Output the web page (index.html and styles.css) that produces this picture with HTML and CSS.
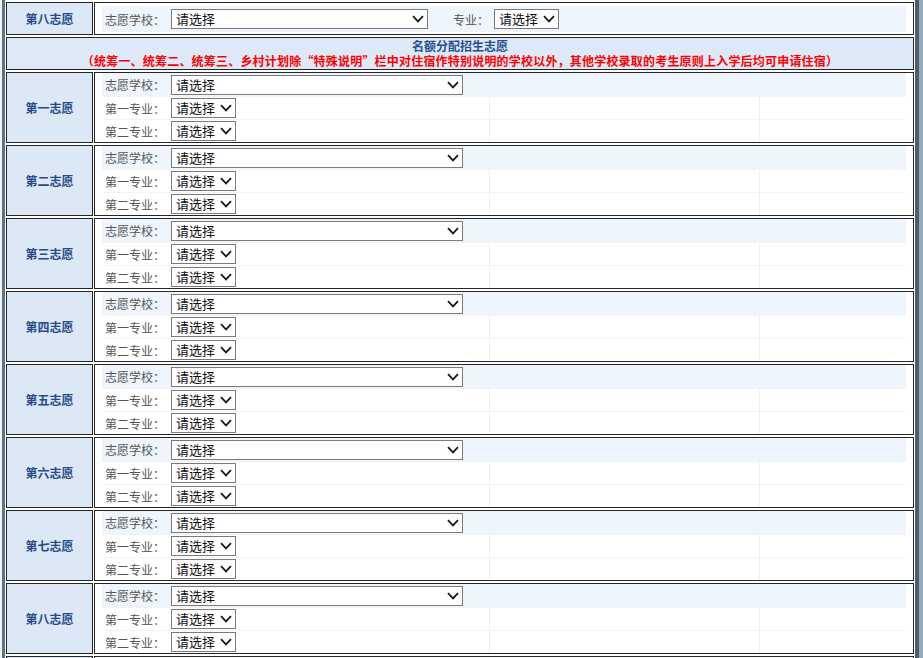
FILE: index.html
```html
<!DOCTYPE html>
<html lang="zh-CN">
<head>
<meta charset="utf-8">
<title>志愿填报</title>
<link rel="stylesheet" href="styles.css">
</head>
<body>
<div class="page">
  <div class="frame">
    <div class="sheet">
      <div class="label">第八志愿</div>
      <div class="cell cell-top">
        <div class="toprow">
          <span class="fl">志愿学校：</span>
          <span class="sel sel-md"><select><option>请选择</option></select><svg class="chev" viewBox="0 0 12 8"><path d="M1 1.2 L6 6.4 L11 1.2"/></svg></span>
          <span class="fl fl-major">专业：</span>
          <span class="sel sel-sm"><select><option>请选择</option></select><svg class="chev" viewBox="0 0 12 8"><path d="M1 1.2 L6 6.4 L11 1.2"/></svg></span>
        </div>
      </div>

      <div class="head">
        <div class="head-title">名额分配招生志愿</div>
        <div class="head-note">（统筹一、统筹二、统筹三、乡村计划除“特殊说明”栏中对住宿作特别说明的学校以外，其他学校录取的考生原则上入学后均可申请住宿）</div>
      </div>

      <div class="label label-blk">第一志愿</div>
      <div class="cell cell-blk">
        <div class="opts">
          <div class="o-school"><span class="fl">志愿学校：</span><span class="sel sel-lg"><select><option>请选择</option></select><svg class="chev" viewBox="0 0 12 8"><path d="M1 1.2 L6 6.4 L11 1.2"/></svg></span></div>
          <div class="o-c1"><span class="fl">第一专业：</span><span class="sel sel-sm"><select><option>请选择</option></select><svg class="chev" viewBox="0 0 12 8"><path d="M1 1.2 L6 6.4 L11 1.2"/></svg></span></div><div class="o-c2"></div><div class="o-c3"></div>
          <div class="o-c1"><span class="fl">第二专业：</span><span class="sel sel-sm"><select><option>请选择</option></select><svg class="chev" viewBox="0 0 12 8"><path d="M1 1.2 L6 6.4 L11 1.2"/></svg></span></div><div class="o-c2"></div><div class="o-c3"></div>
        </div>
      </div>

      <div class="label label-blk">第二志愿</div>
      <div class="cell cell-blk">
        <div class="opts">
          <div class="o-school"><span class="fl">志愿学校：</span><span class="sel sel-lg"><select><option>请选择</option></select><svg class="chev" viewBox="0 0 12 8"><path d="M1 1.2 L6 6.4 L11 1.2"/></svg></span></div>
          <div class="o-c1"><span class="fl">第一专业：</span><span class="sel sel-sm"><select><option>请选择</option></select><svg class="chev" viewBox="0 0 12 8"><path d="M1 1.2 L6 6.4 L11 1.2"/></svg></span></div><div class="o-c2"></div><div class="o-c3"></div>
          <div class="o-c1"><span class="fl">第二专业：</span><span class="sel sel-sm"><select><option>请选择</option></select><svg class="chev" viewBox="0 0 12 8"><path d="M1 1.2 L6 6.4 L11 1.2"/></svg></span></div><div class="o-c2"></div><div class="o-c3"></div>
        </div>
      </div>

      <div class="label label-blk">第三志愿</div>
      <div class="cell cell-blk">
        <div class="opts">
          <div class="o-school"><span class="fl">志愿学校：</span><span class="sel sel-lg"><select><option>请选择</option></select><svg class="chev" viewBox="0 0 12 8"><path d="M1 1.2 L6 6.4 L11 1.2"/></svg></span></div>
          <div class="o-c1"><span class="fl">第一专业：</span><span class="sel sel-sm"><select><option>请选择</option></select><svg class="chev" viewBox="0 0 12 8"><path d="M1 1.2 L6 6.4 L11 1.2"/></svg></span></div><div class="o-c2"></div><div class="o-c3"></div>
          <div class="o-c1"><span class="fl">第二专业：</span><span class="sel sel-sm"><select><option>请选择</option></select><svg class="chev" viewBox="0 0 12 8"><path d="M1 1.2 L6 6.4 L11 1.2"/></svg></span></div><div class="o-c2"></div><div class="o-c3"></div>
        </div>
      </div>

      <div class="label label-blk">第四志愿</div>
      <div class="cell cell-blk">
        <div class="opts">
          <div class="o-school"><span class="fl">志愿学校：</span><span class="sel sel-lg"><select><option>请选择</option></select><svg class="chev" viewBox="0 0 12 8"><path d="M1 1.2 L6 6.4 L11 1.2"/></svg></span></div>
          <div class="o-c1"><span class="fl">第一专业：</span><span class="sel sel-sm"><select><option>请选择</option></select><svg class="chev" viewBox="0 0 12 8"><path d="M1 1.2 L6 6.4 L11 1.2"/></svg></span></div><div class="o-c2"></div><div class="o-c3"></div>
          <div class="o-c1"><span class="fl">第二专业：</span><span class="sel sel-sm"><select><option>请选择</option></select><svg class="chev" viewBox="0 0 12 8"><path d="M1 1.2 L6 6.4 L11 1.2"/></svg></span></div><div class="o-c2"></div><div class="o-c3"></div>
        </div>
      </div>

      <div class="label label-blk">第五志愿</div>
      <div class="cell cell-blk">
        <div class="opts">
          <div class="o-school"><span class="fl">志愿学校：</span><span class="sel sel-lg"><select><option>请选择</option></select><svg class="chev" viewBox="0 0 12 8"><path d="M1 1.2 L6 6.4 L11 1.2"/></svg></span></div>
          <div class="o-c1"><span class="fl">第一专业：</span><span class="sel sel-sm"><select><option>请选择</option></select><svg class="chev" viewBox="0 0 12 8"><path d="M1 1.2 L6 6.4 L11 1.2"/></svg></span></div><div class="o-c2"></div><div class="o-c3"></div>
          <div class="o-c1"><span class="fl">第二专业：</span><span class="sel sel-sm"><select><option>请选择</option></select><svg class="chev" viewBox="0 0 12 8"><path d="M1 1.2 L6 6.4 L11 1.2"/></svg></span></div><div class="o-c2"></div><div class="o-c3"></div>
        </div>
      </div>

      <div class="label label-blk">第六志愿</div>
      <div class="cell cell-blk">
        <div class="opts">
          <div class="o-school"><span class="fl">志愿学校：</span><span class="sel sel-lg"><select><option>请选择</option></select><svg class="chev" viewBox="0 0 12 8"><path d="M1 1.2 L6 6.4 L11 1.2"/></svg></span></div>
          <div class="o-c1"><span class="fl">第一专业：</span><span class="sel sel-sm"><select><option>请选择</option></select><svg class="chev" viewBox="0 0 12 8"><path d="M1 1.2 L6 6.4 L11 1.2"/></svg></span></div><div class="o-c2"></div><div class="o-c3"></div>
          <div class="o-c1"><span class="fl">第二专业：</span><span class="sel sel-sm"><select><option>请选择</option></select><svg class="chev" viewBox="0 0 12 8"><path d="M1 1.2 L6 6.4 L11 1.2"/></svg></span></div><div class="o-c2"></div><div class="o-c3"></div>
        </div>
      </div>

      <div class="label label-blk">第七志愿</div>
      <div class="cell cell-blk">
        <div class="opts">
          <div class="o-school"><span class="fl">志愿学校：</span><span class="sel sel-lg"><select><option>请选择</option></select><svg class="chev" viewBox="0 0 12 8"><path d="M1 1.2 L6 6.4 L11 1.2"/></svg></span></div>
          <div class="o-c1"><span class="fl">第一专业：</span><span class="sel sel-sm"><select><option>请选择</option></select><svg class="chev" viewBox="0 0 12 8"><path d="M1 1.2 L6 6.4 L11 1.2"/></svg></span></div><div class="o-c2"></div><div class="o-c3"></div>
          <div class="o-c1"><span class="fl">第二专业：</span><span class="sel sel-sm"><select><option>请选择</option></select><svg class="chev" viewBox="0 0 12 8"><path d="M1 1.2 L6 6.4 L11 1.2"/></svg></span></div><div class="o-c2"></div><div class="o-c3"></div>
        </div>
      </div>

      <div class="label label-blk">第八志愿</div>
      <div class="cell cell-blk">
        <div class="opts">
          <div class="o-school"><span class="fl">志愿学校：</span><span class="sel sel-lg"><select><option>请选择</option></select><svg class="chev" viewBox="0 0 12 8"><path d="M1 1.2 L6 6.4 L11 1.2"/></svg></span></div>
          <div class="o-c1"><span class="fl">第一专业：</span><span class="sel sel-sm"><select><option>请选择</option></select><svg class="chev" viewBox="0 0 12 8"><path d="M1 1.2 L6 6.4 L11 1.2"/></svg></span></div><div class="o-c2"></div><div class="o-c3"></div>
          <div class="o-c1"><span class="fl">第二专业：</span><span class="sel sel-sm"><select><option>请选择</option></select><svg class="chev" viewBox="0 0 12 8"><path d="M1 1.2 L6 6.4 L11 1.2"/></svg></span></div><div class="o-c2"></div><div class="o-c3"></div>
        </div>
      </div>

      <div class="label label-blk"></div>
      <div class="cell cell-blk"></div>
    </div>
  </div>
</div>
</body>
</html>
```

FILE: styles.css
```css
html, body {
  margin: 0;
  padding: 0;
  background: #ffffff;
  overflow: hidden;
}

body {
  font-family: "Noto Sans CJK SC", "Noto Sans", sans-serif;
  font-size: 12px;
  color: #555555;
}

.page {
  width: 923px;
  height: 658px;
  overflow: hidden;
  padding-left: 2px;
  box-sizing: border-box;
  background: #eef3f8;
}

.frame {
  width: 917px;
  box-sizing: border-box;
  border-left: 3px solid #5b7487;
  border-right: 4px solid #4a5f70;
  padding: 2px 1px 0 1px;
  background: #ffffff;
  box-shadow: 4px 0 0 #98a9b6;
  height: 700px;
}

.sheet {
  display: grid;
  grid-template-columns: 87px 1fr;
  column-gap: 1px;
  row-gap: 2px;
}

.label {
  border: 1px solid #262626;
  background: #dce8f5;
  color: #284a8a;
  font-weight: bold;
  font-size: 12px;
  display: flex;
  align-items: center;
  justify-content: center;
}

.cell {
  border: 1px solid #262626;
  background: #ffffff;
  padding: 0 7px;
}

.cell-top {
  height: 33px;
  box-sizing: border-box;
  padding-top: 3px;
  padding-bottom: 1px;
}

.toprow {
  height: 26px;
  background: #eef5fd;
  display: flex;
  align-items: center;
  padding-left: 3px;
}

.fl {
  display: inline-block;
  width: 66px;
  flex: none;
  color: #555555;
  font-size: 12px;
}

.fl-major {
  width: auto;
  margin-left: 25px;
  margin-right: 5px;
}

.head {
  grid-column: 1 / span 2;
  height: 33px;
  box-sizing: border-box;
  border: 1px solid #262626;
  background: #dde9f6;
  text-align: center;
  padding-top: 0;
  font-weight: bold;
  font-size: 12px;
  line-height: 15px;
}

.head-title {
  color: #24508f;
}

.head-note {
  color: #ff0000;
  letter-spacing: 0.2px;
}

.label-blk,
.cell-blk {
  height: 71px;
  box-sizing: border-box;
}

.opts {
  display: grid;
  grid-template-columns: 388px 270px 1fr;
  grid-auto-rows: 23px;
}

.opts > div {
  box-sizing: border-box;
  display: flex;
  align-items: center;
}

.o-school {
  grid-column: 1 / span 3;
  background: #eef5fd;
  padding-left: 3px;
}

.o-c1 {
  padding-left: 3px;
  border-right: 1px solid #f0f0f0;
  border-top: 1px solid #f3f3f3;
}

.o-c2 {
  border-right: 1px solid #f0f0f0;
  border-top: 1px solid #f3f3f3;
}

.o-c3 {
  border-top: 1px solid #f3f3f3;
}

.sel {
  position: relative;
  display: inline-block;
  height: 20px;
  flex: none;
}

.sel select {
  appearance: none;
  -webkit-appearance: none;
  width: 100%;
  height: 20px;
  box-sizing: border-box;
  border: 1px solid #7a7a7a;
  border-radius: 0;
  background: #ffffff;
  color: #111111;
  font-family: "Noto Sans CJK SC", "Noto Sans", sans-serif;
  font-size: 13px;
  line-height: 18px;
  padding: 0 0 0 4px;
  margin: 0;
  display: block;
}

.sel-lg { width: 292px; }
.sel-md { width: 257px; }
.sel-sm { width: 65px; }

.chev {
  position: absolute;
  right: 4px;
  top: 6px;
  width: 12px;
  height: 8px;
  pointer-events: none;
}

.chev path {
  fill: none;
  stroke: #1a1a1a;
  stroke-width: 1.8;
}
```
